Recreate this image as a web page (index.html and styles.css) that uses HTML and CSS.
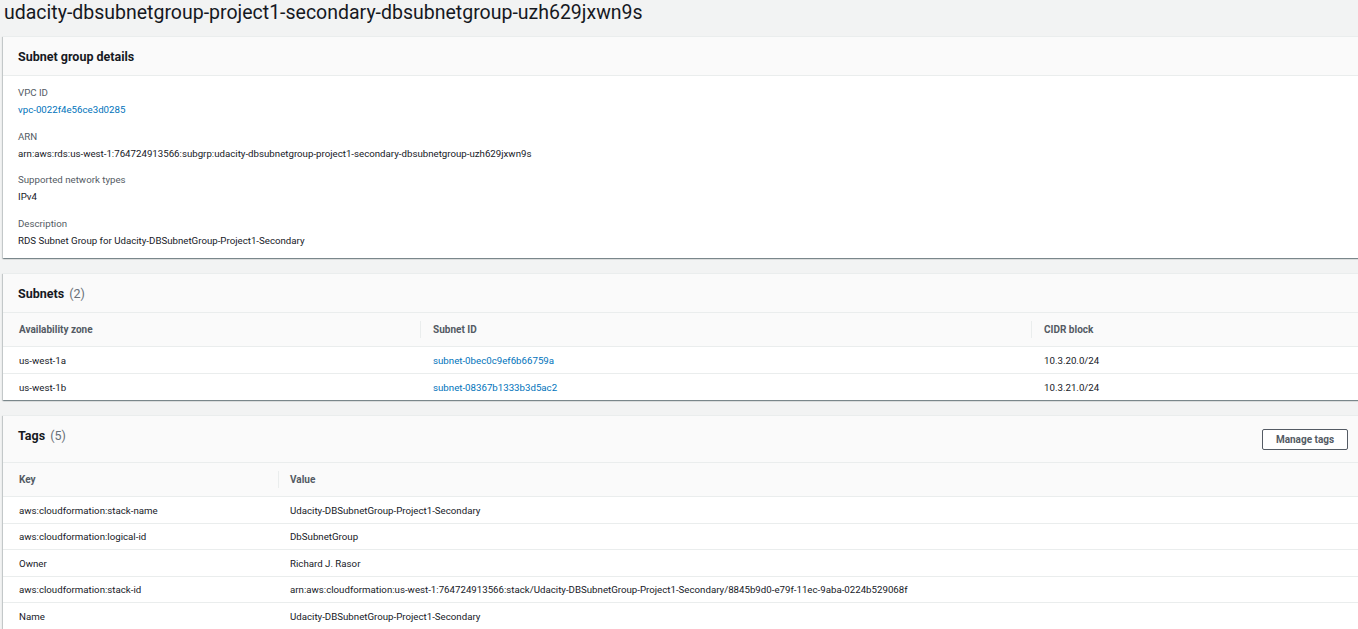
FILE: index.html
```html
<!DOCTYPE html>
<html lang="en">
<head>
<meta charset="utf-8">
<title>Subnet group</title>
<link rel="stylesheet" href="styles.css">
</head>
<body>
<h1 class="page-title">udacity-dbsubnetgroup-project1-secondary-dbsubnetgroup-uzh629jxwn9s</h1>

<section class="panel">
  <header class="panel-header"><h2 class="panel-title">Subnet group details</h2></header>
  <div class="details">
    <div class="field">
      <div class="label">VPC ID</div>
      <div class="value"><a class="link" href="#">vpc-0022f4e56ce3d0285</a></div>
    </div>
    <div class="field">
      <div class="label">ARN</div>
      <div class="value">arn:aws:rds:us-west-1:764724913566:subgrp:udacity-dbsubnetgroup-project1-secondary-dbsubnetgroup-uzh629jxwn9s</div>
    </div>
    <div class="field">
      <div class="label">Supported network types</div>
      <div class="value">IPv4</div>
    </div>
    <div class="field">
      <div class="label">Description</div>
      <div class="value">RDS Subnet Group for Udacity-DBSubnetGroup-Project1-Secondary</div>
    </div>
  </div>
</section>

<section class="panel">
  <header class="panel-header"><h2 class="panel-title">Subnets <span class="count">(2)</span></h2></header>
  <table class="table subnets">
    <thead>
      <tr><th class="c1">Availability zone</th><th class="c2">Subnet ID</th><th>CIDR block</th></tr>
    </thead>
    <tbody>
      <tr><td>us-west-1a</td><td><a class="link" href="#">subnet-0bec0c9ef6b66759a</a></td><td>10.3.20.0/24</td></tr>
      <tr><td>us-west-1b</td><td><a class="link" href="#">subnet-08367b1333b3d5ac2</a></td><td>10.3.21.0/24</td></tr>
    </tbody>
  </table>
</section>

<section class="panel">
  <header class="panel-header tall"><h2 class="panel-title">Tags <span class="count">(5)</span></h2><button class="btn">Manage tags</button></header>
  <table class="table tags">
    <thead>
      <tr><th class="k">Key</th><th>Value</th></tr>
    </thead>
    <tbody>
      <tr><td>aws:cloudformation:stack-name</td><td>Udacity-DBSubnetGroup-Project1-Secondary</td></tr>
      <tr><td>aws:cloudformation:logical-id</td><td>DbSubnetGroup</td></tr>
      <tr><td>Owner</td><td>Richard J. Rasor</td></tr>
      <tr><td>aws:cloudformation:stack-id</td><td>arn:aws:cloudformation:us-west-1:764724913566:stack/Udacity-DBSubnetGroup-Project1-Secondary/8845b9d0-e79f-11ec-9aba-0224b529068f</td></tr>
      <tr><td>Name</td><td>Udacity-DBSubnetGroup-Project1-Secondary</td></tr>
    </tbody>
  </table>
</section>
</body>
</html>
```
FILE: styles.css
```css
html, body {
  margin: 0;
  padding: 0;
  overflow: hidden;
}
body {
  background: #f2f3f3;
  font-family: Roboto, "Liberation Sans", Arial, sans-serif;
  color: #16191f;
  font-size: 9.7px;
  line-height: 14px;
}
.page-title {
  margin: 0 0 10px 0;
  padding-left: 4px;
  font-size: 19.5px;
  line-height: 26px;
  font-weight: 400;
  color: #16191f;
  white-space: nowrap;
}
.panel {
  margin: 0 -2px 15px 3px;
  background: #fff;
  border-top: 1px solid #eaeded;
  box-shadow: 0 1px 1px 0 rgba(0, 28, 36, .3), 1px 1px 1px 0 rgba(0, 28, 36, .15), -1px 1px 1px 0 rgba(0, 28, 36, .15);
}
.panel-header {
  display: flex;
  align-items: flex-start;
  justify-content: space-between;
  padding: 13px 12px 11px 15px;
  background: #fafafa;
  border-bottom: 1px solid #eaeded;
}
.panel-header.tall {
  padding-bottom: 12px;
}
.panel-title {
  margin: 0;
  font-size: 12.5px;
  line-height: 14px;
  font-weight: 700;
  color: #16191f;
}
.count {
  font-weight: 400;
  color: #687078;
  margin-left: 2px;
}
.details {
  display: flex;
  flex-direction: column;
  gap: 12.5px;
  padding: 10px 15px 10px 15px;
}
.label {
  color: #545b64;
}
.value {
  margin-top: 3px;
  color: #16191f;
}
.link {
  color: #0073bb;
  text-decoration: none;
}
.table {
  width: 100%;
  border-collapse: collapse;
  table-layout: fixed;
}
.table th {
  position: relative;
  height: 34px;
  padding: 2px 0 0 13px;
  text-align: left;
  font-size: 10px;
  font-weight: 700;
  color: #545b64;
  background: #fafafa;
  border-bottom: 1px solid #eaeded;
  box-sizing: border-box;
}
.table th + th::before {
  content: "";
  position: absolute;
  left: 0;
  top: 8px;
  bottom: 8px;
  width: 1px;
  background: #eaeded;
}
.table td {
  height: 26.5px;
  padding: 2px 0 0 13px;
  color: #16191f;
  border-bottom: 1px solid #eaeded;
  white-space: nowrap;
  box-sizing: border-box;
}
.tags th,
.tags td {
  padding-left: 12px;
}
.table th:first-child,
.table td:first-child {
  padding-left: 16px;
}
.table tbody tr:last-child td {
  border-bottom: 0;
}
.subnets th.c1 { width: 417px; }
.subnets th.c2 { width: 611px; }
.tags th.k { width: 275px; }
.btn {
  width: 86px;
  height: 21px;
  padding: 0;
  background: #fff;
  border: 1px solid #545b64;
  border-radius: 2px;
  font-family: inherit;
  font-size: 10px;
  font-weight: 700;
  color: #545b64;
}
```
